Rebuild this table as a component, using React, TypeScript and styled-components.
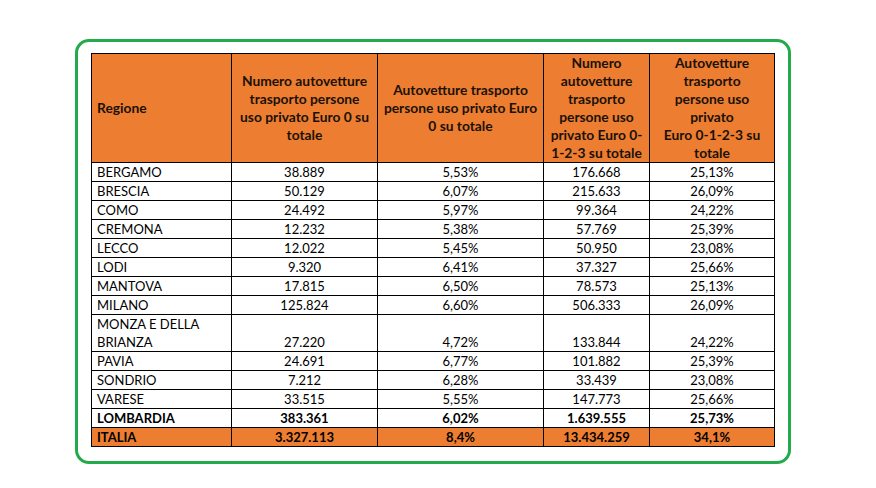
import React from "react";
import styled, { createGlobalStyle } from "styled-components";

const GlobalStyle = createGlobalStyle`
  html, body {
    margin: 0;
    padding: 0;
    background: #ffffff;
  }
  body {
    font-family: Lato, "Open Sans", sans-serif;
  }
`;

const Page = styled.div`
  padding: 39px 0 0 75px;
`;

const Frame = styled.div`
  box-sizing: border-box;
  width: 716px;
  height: 425px;
  border: 3px solid #23ab4b;
  border-radius: 14px;
  padding: 11px 0 0 13px;
`;

const Table = styled.table`
  border-collapse: collapse;
  table-layout: fixed;
  width: 683px;
  font-family: Lato, "Open Sans", sans-serif;
  font-size: 13px;
  color: #000;
`;

const HeadCell = styled.th<{ $left?: boolean }>`
  background: #ed7d31;
  border: 1px solid #000;
  height: 108px;
  padding: 0 3px;
  box-sizing: border-box;
  font-size: 13.8px;
  font-weight: 700;
  line-height: 18px;
  color: #1a1208;
  vertical-align: middle;
  white-space: nowrap;
  text-align: ${(p) => (p.$left ? "left" : "center")};
  padding-left: ${(p) => (p.$left ? "5px" : "3px")};
`;

const Row = styled.tr<{ $variant?: "total" | "italy" }>`
  background: ${(p) => (p.$variant === "italy" ? "#ed7d31" : "#ffffff")};
  font-weight: ${(p) => (p.$variant ? 700 : 400)};
`;

const Cell = styled.td<{ $left?: boolean }>`
  border: 1px solid #000;
  padding: 0 4px;
  padding-left: ${(p) => (p.$left ? "5px" : "4px")};
  line-height: 18px;
  vertical-align: bottom;
  text-align: ${(p) => (p.$left ? "left" : "center")};
  white-space: nowrap;
`;

const NameCell = styled(Cell)`
  white-space: normal;
`;

type Entry = {
  name: React.ReactNode;
  a: string;
  b: string;
  c: string;
  d: string;
  variant?: "total" | "italy";
};

const rows: Entry[] = [
  { name: "BERGAMO", a: "38.889", b: "5,53%", c: "176.668", d: "25,13%" },
  { name: "BRESCIA", a: "50.129", b: "6,07%", c: "215.633", d: "26,09%" },
  { name: "COMO", a: "24.492", b: "5,97%", c: "99.364", d: "24,22%" },
  { name: "CREMONA", a: "12.232", b: "5,38%", c: "57.769", d: "25,39%" },
  { name: "LECCO", a: "12.022", b: "5,45%", c: "50.950", d: "23,08%" },
  { name: "LODI", a: "9.320", b: "6,41%", c: "37.327", d: "25,66%" },
  { name: "MANTOVA", a: "17.815", b: "6,50%", c: "78.573", d: "25,13%" },
  { name: "MILANO", a: "125.824", b: "6,60%", c: "506.333", d: "26,09%" },
  {
    name: (
      <>
        MONZA E DELLA
        <br />
        BRIANZA
      </>
    ),
    a: "27.220",
    b: "4,72%",
    c: "133.844",
    d: "24,22%",
  },
  { name: "PAVIA", a: "24.691", b: "6,77%", c: "101.882", d: "25,39%" },
  { name: "SONDRIO", a: "7.212", b: "6,28%", c: "33.439", d: "23,08%" },
  { name: "VARESE", a: "33.515", b: "5,55%", c: "147.773", d: "25,66%" },
  { name: "LOMBARDIA", a: "383.361", b: "6,02%", c: "1.639.555", d: "25,73%", variant: "total" },
  { name: "ITALIA", a: "3.327.113", b: "8,4%", c: "13.434.259", d: "34,1%", variant: "italy" },
];

export default function App() {
  return (
    <>
      <GlobalStyle />
      <Page>
        <Frame>
          <Table>
            <colgroup>
              <col style={{ width: 140 }} />
              <col style={{ width: 146 }} />
              <col style={{ width: 166 }} />
              <col style={{ width: 106 }} />
              <col style={{ width: 125 }} />
            </colgroup>
            <thead>
              <tr>
                <HeadCell $left>Regione</HeadCell>
                <HeadCell>
                  Numero autovetture
                  <br />
                  trasporto persone
                  <br />
                  uso privato Euro 0 su
                  <br />
                  totale
                </HeadCell>
                <HeadCell>
                  Autovetture trasporto
                  <br />
                  persone uso privato Euro
                  <br />0 su totale
                </HeadCell>
                <HeadCell>
                  Numero
                  <br />
                  autovetture
                  <br />
                  trasporto
                  <br />
                  persone uso
                  <br />
                  privato Euro 0-
                  <br />
                  1-2-3 su totale
                </HeadCell>
                <HeadCell>
                  Autovetture
                  <br />
                  trasporto
                  <br />
                  persone uso
                  <br />
                  privato
                  <br />
                  Euro 0-1-2-3 su
                  <br />
                  totale
                </HeadCell>
              </tr>
            </thead>
            <tbody>
              {rows.map((r, i) => (
                <Row key={i} $variant={r.variant}>
                  <NameCell $left>{r.name}</NameCell>
                  <Cell>{r.a}</Cell>
                  <Cell>{r.b}</Cell>
                  <Cell>{r.c}</Cell>
                  <Cell>{r.d}</Cell>
                </Row>
              ))}
            </tbody>
          </Table>
        </Frame>
      </Page>
    </>
  );
}
